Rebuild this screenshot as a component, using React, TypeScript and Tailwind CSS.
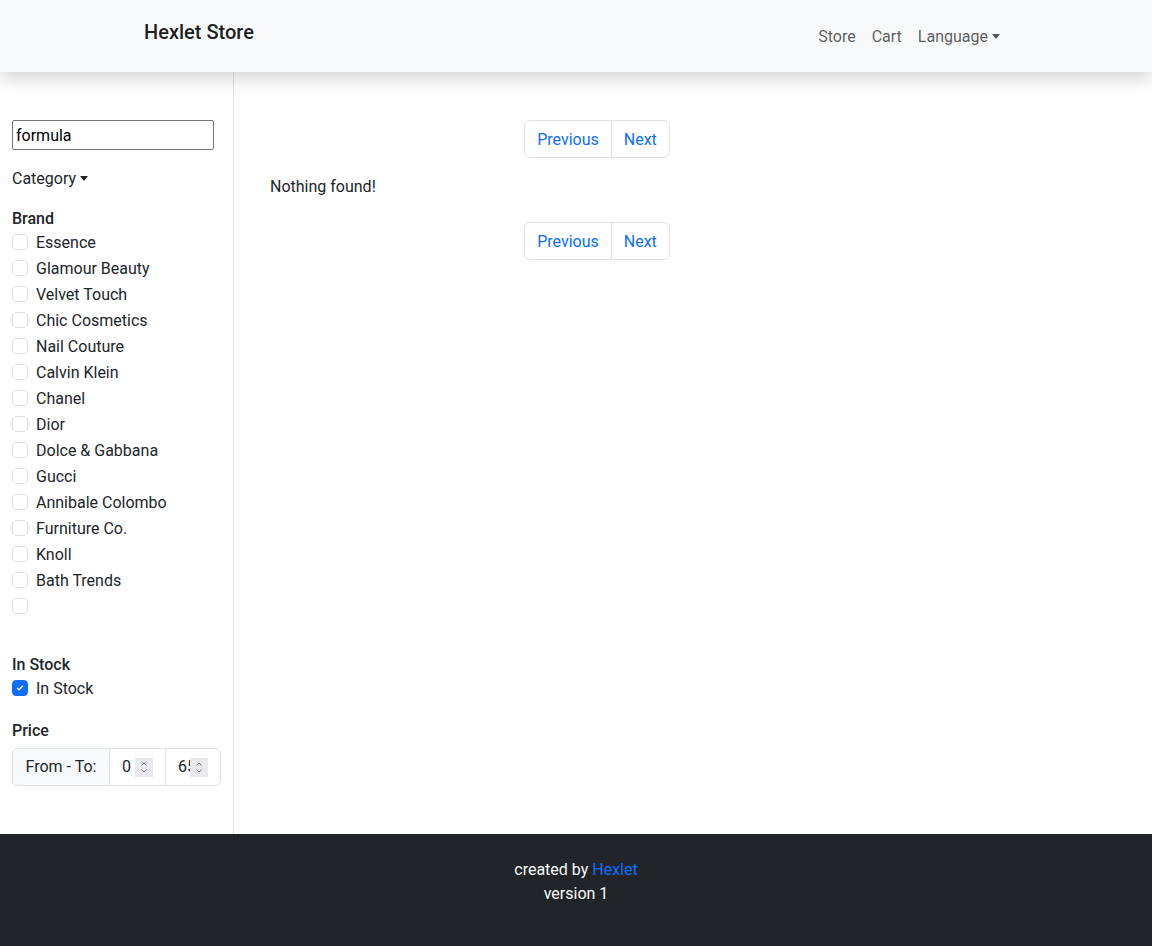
import React from "react";

const brands = [
  "Essence",
  "Glamour Beauty",
  "Velvet Touch",
  "Chic Cosmetics",
  "Nail Couture",
  "Calvin Klein",
  "Chanel",
  "Dior",
  "Dolce & Gabbana",
  "Gucci",
  "Annibale Colombo",
  "Furniture Co.",
  "Knoll",
  "Bath Trends",
  "",
];

function Caret() {
  return (
    <span className="inline-block w-0 h-0 ml-[4px] align-[3px] border-t-[5px] border-t-current border-x-[4px] border-x-transparent" />
  );
}

function Check({ checked = false }: { checked?: boolean }) {
  return checked ? (
    <span className="w-4 h-4 rounded-[4px] bg-[#0d6efd] border border-[#0d6efd] flex items-center justify-center shrink-0">
      <svg width="10" height="10" viewBox="0 0 20 20">
        <path d="M5 10.5l3 3 7-7" fill="none" stroke="#fff" strokeWidth="3" strokeLinecap="round" strokeLinejoin="round" />
      </svg>
    </span>
  ) : (
    <span className="w-4 h-4 rounded-[4px] bg-white border border-[#dee2e6] shrink-0" />
  );
}

function Spinner() {
  return (
    <span className="w-[18px] h-[19px] bg-[#e9e9ed] flex items-center justify-center shrink-0">
      <svg width="10" height="13" viewBox="0 0 10 13">
        <path d="M2.5 4.5L5 2l2.5 2.5M2.5 8.5L5 11l2.5-2.5" fill="none" stroke="#7a7a7a" strokeWidth="1" />
      </svg>
    </span>
  );
}

function Pagination() {
  return (
    <div className="flex justify-center">
      <div className="flex items-center h-[38px] border border-[#dee2e6] rounded-[6px] text-[#0d6efd]">
        <span className="px-3 pt-[2px] h-full flex items-center">Previous</span>
        <span className="px-3 pt-[2px] h-full flex items-center border-l border-[#dee2e6]">Next</span>
      </div>
    </div>
  );
}

export default function App() {
  return (
    <div className="font-['Roboto',sans-serif] text-[16px] leading-6 text-[#212529] bg-white">
      <nav className="relative z-10 h-[72px] bg-[#f8f9fa] shadow-[0_8px_16px_rgba(0,0,0,0.15)]">
        <div className="w-[864px] mx-auto flex justify-between items-start">
          <span className="pt-[17px] text-[20px] leading-[30px] font-medium text-[rgba(0,0,0,0.9)]">Hexlet Store</span>
          <div className="pt-[25px] flex text-[rgba(0,0,0,0.65)]">
            <span className="px-2">Store</span>
            <span className="px-2">Cart</span>
            <span className="px-2">
              Language
              <Caret />
            </span>
          </div>
        </div>
      </nav>
      <div className="flex">
        <aside className="w-[234px] shrink-0 border-r border-[#dee2e6] px-3 pt-12 pb-12">
          <div className="w-[202px] h-[30px] border border-[#767676] rounded-[2px] px-[3px] pt-[2px] flex items-center text-black">
            formula
          </div>
          <div className="mt-4 h-6 pt-px">
            Category
            <Caret />
          </div>
          <div className="mt-4 h-6 pt-px font-medium">Brand</div>
          <div>
            {brands.map((b, i) => (
              <div key={i} className="h-[24px] mb-[2px] flex items-center gap-2">
                <Check />
                <span className="pt-[2px]">{b}</span>
              </div>
            ))}
          </div>
          <div className="mt-[34px] h-6 pt-px font-medium">In Stock</div>
          <div className="h-[24px] mb-[2px] flex items-center gap-2">
            <Check checked />
            <span className="pt-[2px]">In Stock</span>
          </div>
          <div className="mt-[18px] h-6 pt-px font-medium">Price</div>
          <div className="mt-[6px] flex h-[38px] border border-[#dee2e6] rounded-[6px]">
            <div className="w-[96px] shrink-0 bg-[#f8f9fa] rounded-l-[6px] flex items-center justify-center">From - To:</div>
            <div className="w-[56px] shrink-0 border-l border-[#dee2e6] px-3 flex items-center">
              <span className="flex-1 min-w-0 overflow-hidden whitespace-nowrap text-[#212529]">0</span>
              <Spinner />
            </div>
            <div className="flex-1 min-w-0 border-l border-[#dee2e6] px-3 flex items-center">
              <span className="flex-1 min-w-0 overflow-hidden whitespace-nowrap text-[#212529]">65</span>
              <Spinner />
            </div>
          </div>
        </aside>
        <main className="flex-1 pl-9 pt-12">
          <div className="w-[654px]">
            <Pagination />
            <div className="mt-4 h-6 pt-px">Nothing found!</div>
            <div className="mt-6">
              <Pagination />
            </div>
          </div>
        </main>
      </div>
      <footer className="h-[112px] bg-[#212529] text-[#f8f9fa] text-center pt-6">
        <div>
          created by <span className="text-[#0d6efd]">Hexlet</span>
        </div>
        <div>version 1</div>
      </footer>
    </div>
  );
}
